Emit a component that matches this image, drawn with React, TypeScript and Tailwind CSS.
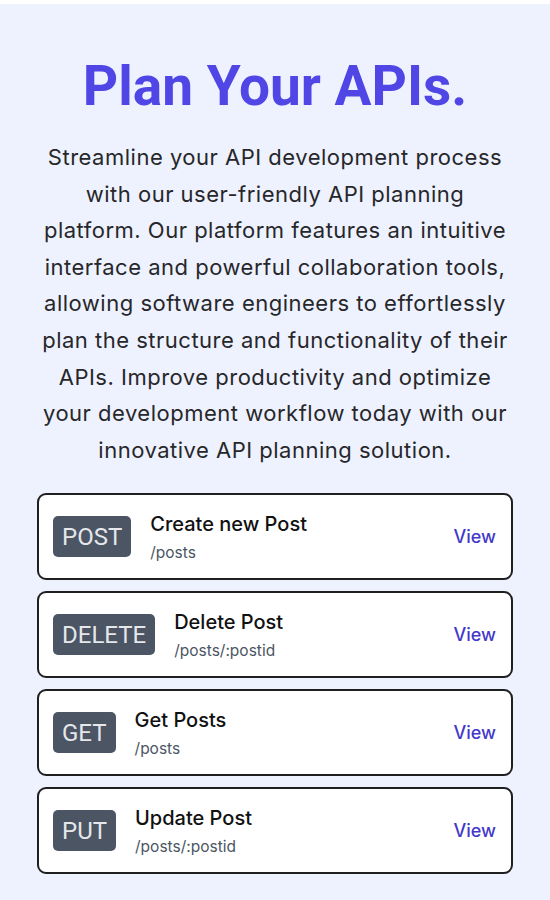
import React from "react";

const endpoints = [
  { method: "POST", title: "Create new Post", path: "/posts" },
  { method: "DELETE", title: "Delete Post", path: "/posts/:postid" },
  { method: "GET", title: "Get Posts", path: "/posts" },
  { method: "PUT", title: "Update Post", path: "/posts/:postid" },
];

export default function App() {
  return (
    <div className="min-h-screen bg-[#eef2ff] border-t-4 border-white">
      <div className="flex flex-col items-center px-[37px]">
        <h1
          className="mt-[50px] text-[55px] leading-[64px] font-bold text-[#4f46e5] text-center"
          style={{ fontFamily: "Roboto, sans-serif" }}
        >
          Plan Your APIs.
        </h1>
        <p
          className="mt-[21px] w-[476px] text-center text-[22px] tracking-[0.5px] leading-[36.6px] text-[#27272a]"
          style={{ fontFamily: "Inter, sans-serif" }}
        >
          Streamline your API development process with our user-friendly API
          planning platform. Our platform features an intuitive interface and
          powerful collaboration tools, allowing software engineers to
          effortlessly plan the structure and functionality of their APIs.
          Improve productivity and optimize your development workflow today
          with our innovative API planning solution.
        </p>
        <div className="mt-[25px] w-full flex flex-col gap-[11px]">
          {endpoints.map((e) => (
            <div
              key={e.method}
              className="h-[87px] flex items-center bg-white border-2 border-[#1f1f1f] rounded-[9px] pl-[14px] pr-[15px]"
            >
              <span
                className="h-[41px] px-[9px] flex items-center rounded-[5px] bg-[#4b5563] text-[#e5e7eb] text-[24px]"
                style={{ fontFamily: "Roboto, sans-serif" }}
              >
                {e.method}
              </span>
              <div
                className="ml-[19px] flex flex-col"
                style={{ fontFamily: "Inter, sans-serif" }}
              >
                <span className="text-[20px] leading-[26px] font-medium text-[#111]">
                  {e.title}
                </span>
                <span className="mt-[6px] text-[15.5px] leading-[20px] text-[#4b5563]">
                  {e.path}
                </span>
              </div>
              <span
                className="ml-auto text-[18px] font-medium text-[#4338ca]"
                style={{ fontFamily: "Inter, sans-serif" }}
              >
                View
              </span>
            </div>
          ))}
        </div>
      </div>
    </div>
  );
}
